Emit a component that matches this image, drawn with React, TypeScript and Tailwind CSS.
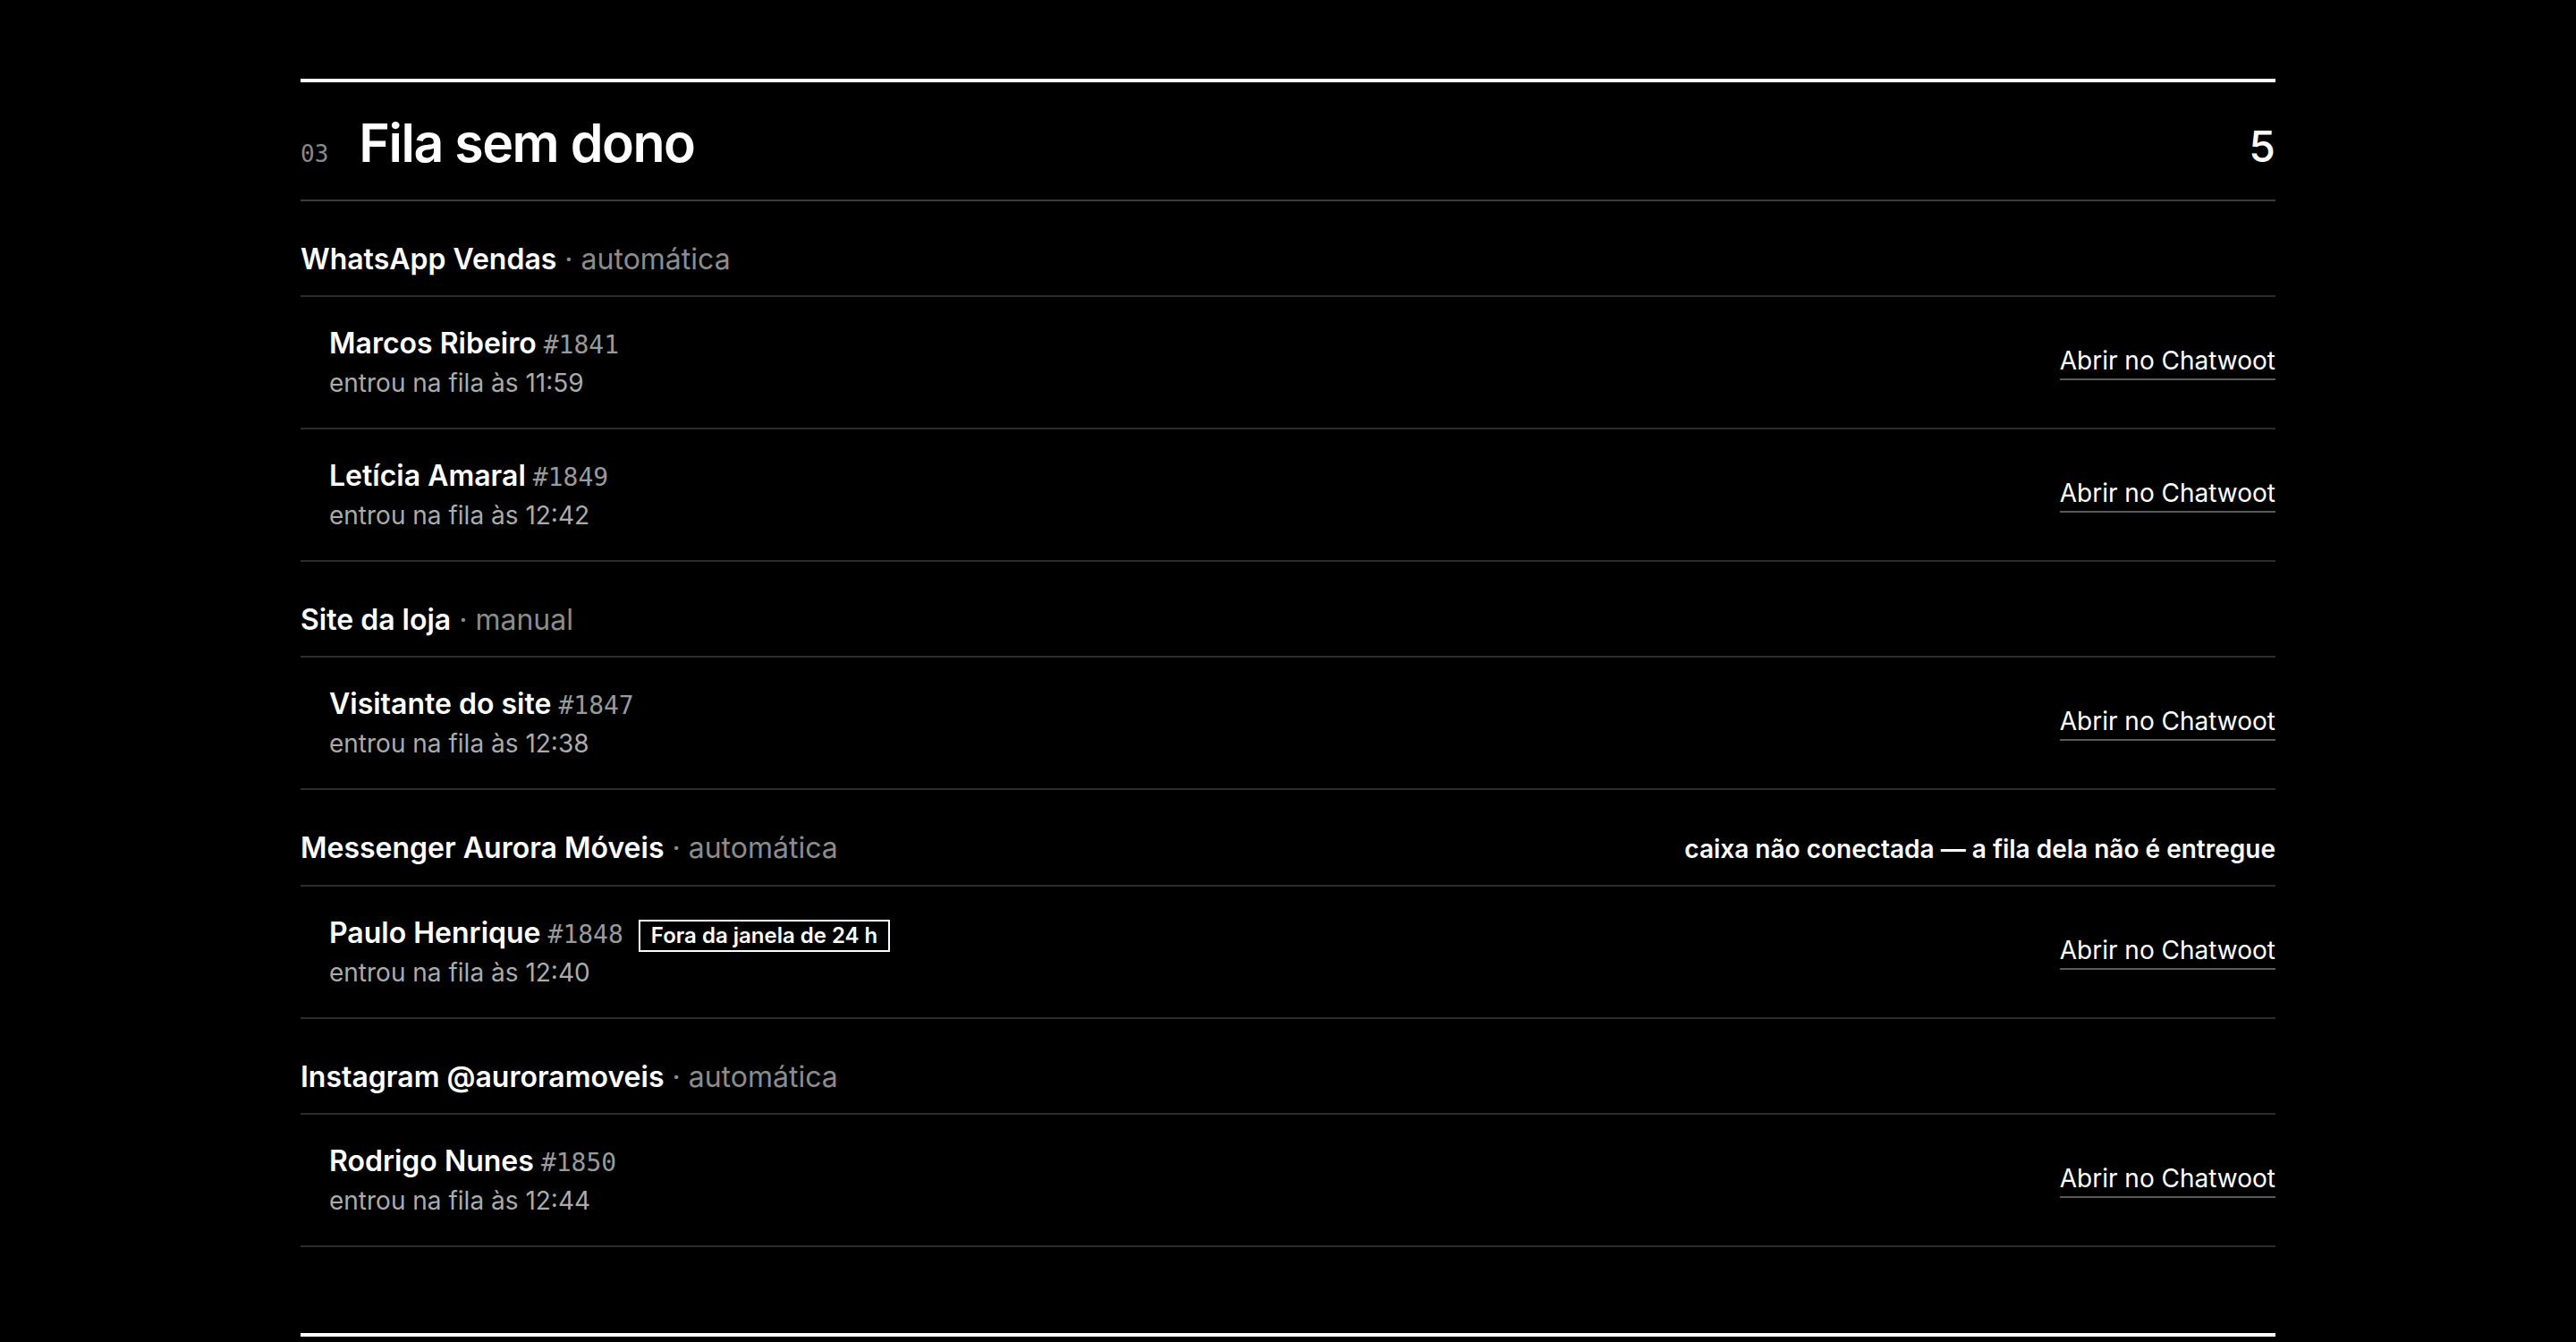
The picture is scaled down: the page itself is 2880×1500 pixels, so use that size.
type Conversation = {
  name: string
  id: number
  since: string
  badge?: string
}

type Inbox = {
  name: string
  mode: string
  warning?: string
  items: Conversation[]
}

const inboxes: Inbox[] = [
  {
    name: 'WhatsApp Vendas',
    mode: 'automática',
    items: [
      { name: 'Marcos Ribeiro', id: 1841, since: '11:59' },
      { name: 'Letícia Amaral', id: 1849, since: '12:42' },
    ],
  },
  {
    name: 'Site da loja',
    mode: 'manual',
    items: [{ name: 'Visitante do site', id: 1847, since: '12:38' }],
  },
  {
    name: 'Messenger Aurora Móveis',
    mode: 'automática',
    warning: 'caixa não conectada — a fila dela não é entregue',
    items: [{ name: 'Paulo Henrique', id: 1848, since: '12:40', badge: 'Fora da janela de 24 h' }],
  },
  {
    name: 'Instagram @auroramoveis',
    mode: 'automática',
    items: [{ name: 'Rodrigo Nunes', id: 1850, since: '12:44' }],
  },
]

const total = inboxes.reduce((n, inbox) => n + inbox.items.length, 0)

function QueueRow({ item }: { item: Conversation }) {
  return (
    <div className="flex items-center justify-between pl-8 py-8 border-b-2 border-[#2c2c2c]">
      <div>
        <div className="h-[40px] text-[32px] leading-[40px] font-semibold text-white whitespace-nowrap">
          {item.name}{' '}
          <span className="font-['DejaVu_Sans_Mono',monospace] font-normal text-[28px] leading-none text-[#9a9a9a]">
            #{item.id}
          </span>
          {item.badge && (
            <span className="inline-block -my-1 ml-[17px] border-2 border-white px-[12px] text-[24px] leading-[32px] font-semibold text-white">
              {item.badge}
            </span>
          )}
        </div>
        <div className="mt-[6px] text-[28px] leading-[36px] text-[#ababab]">
          entrou na fila às {item.since}
        </div>
      </div>
      <a
        href="#"
        className="pt-[2px] pb-[4px] text-[28px] leading-[32px] text-white border-b-2 border-[#5a5a5a]"
      >
        Abrir no Chatwoot
      </a>
    </div>
  )
}

export default function App() {
  return (
    <div className="min-h-screen bg-black font-['Inter',sans-serif] overflow-hidden">
      <div className="max-w-[2208px] mx-auto pt-[88px]">
        <section className="border-t-4 border-white">
          <header className="flex items-baseline justify-between pt-8 pb-[23px] border-b-2 border-[#3a3a3a]">
            <div className="flex items-baseline gap-[34px]">
              <span className="font-['DejaVu_Sans_Mono',monospace] text-[26px] text-[#8a8a8a]">03</span>
              <h2 className="text-[59px] leading-[72px] font-semibold tracking-[-0.025em] text-white">
                Fila sem dono
              </h2>
            </div>
            <span className="text-[48px] font-medium text-white">{total}</span>
          </header>

          {inboxes.map((inbox) => (
            <div key={inbox.name}>
              <div className="flex items-baseline justify-between pt-[45px] pb-[20px] border-b-2 border-[#2c2c2c]">
                <div className="text-[32px] leading-[40px]">
                  <span className="font-semibold text-white">{inbox.name}</span>
                  <span className="text-[#8c8c8c]"> · {inbox.mode}</span>
                </div>
                {inbox.warning && (
                  <span className="text-[28px] leading-[40px] font-semibold text-white">{inbox.warning}</span>
                )}
              </div>
              {inbox.items.map((item) => (
                <QueueRow key={item.id} item={item} />
              ))}
            </div>
          ))}
        </section>

        <section className="mt-[96px] border-t-4 border-white h-[60px]" />
      </div>
    </div>
  )
}
